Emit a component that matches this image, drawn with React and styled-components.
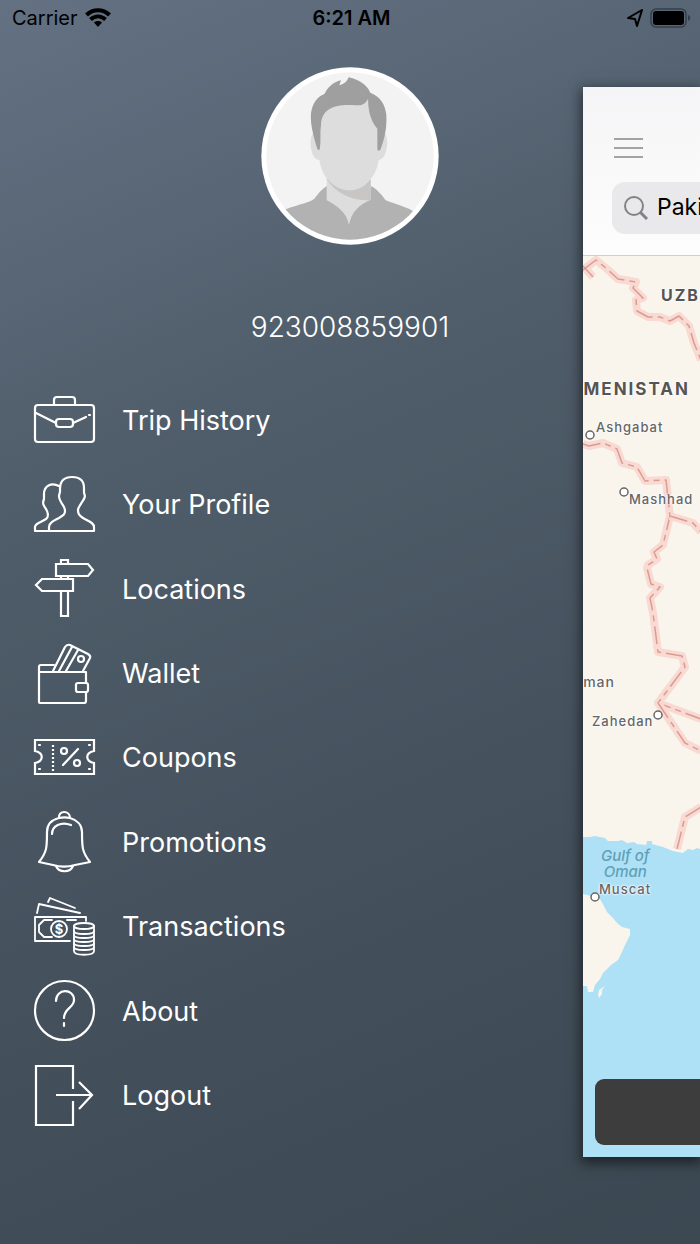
import React from 'react';
import styled, { createGlobalStyle } from 'styled-components';

const GlobalStyle = createGlobalStyle`
  * { box-sizing: border-box; }
  body {
    margin: 0;
    background: #3c4852;
    font-family: Inter, "Liberation Sans", sans-serif;
  }
`;

const Screen = styled.div`
  min-height: 100vh;
  display: grid;
  grid-template-columns: minmax(0, 1fr) 117px;
  overflow: hidden;
  background: linear-gradient(157deg, #637183 0%, #4f5d6a 34%, #434f5b 70%, #3b4751 100%);
`;

const Drawer = styled.main`
  grid-area: 1 / 1 / 2 / 3;
  display: flex;
  flex-direction: column;
  padding-bottom: 106px;
`;

const StatusBar = styled.header`
  display: grid;
  grid-template-columns: 1fr auto 1fr;
  align-items: center;
  height: 36px;
  padding: 0 9px 0 12px;
  color: #000;
  font-size: 20px;
`;

const StatusGroup = styled.div`
  display: flex;
  align-items: center;
  justify-content: ${(p) => (p.$end ? 'flex-end' : 'flex-start')};
  gap: 7px;
`;

const Clock = styled.time`
  font-weight: 600;
`;

const Profile = styled.section`
  display: flex;
  flex-direction: column;
  align-items: center;
  gap: 60px;
  padding: 31px 0 29px;
`;

const Avatar = styled.svg`
  display: block;
  width: 178px;
  height: 178px;
`;

const Phone = styled.p`
  margin: 0;
  color: #fff;
  font-size: 28px;
  line-height: 44px;
  font-weight: 300;
`;

const MenuNav = styled.nav`
  flex: 1;
  display: flex;
  width: 520px;
  max-width: 80%;
`;

const MenuList = styled.ul`
  flex: 1;
  display: grid;
  grid-auto-rows: 1fr;
  margin: 0;
  padding: 0 0 0 32px;
  list-style: none;
`;

const MenuItem = styled.li`
  display: flex;
`;

const MenuLink = styled.a`
  flex: 1;
  display: flex;
  align-items: center;
  gap: 26px;
  color: #fff;
  font-size: 27px;
  text-decoration: none;
`;

const MenuIcon = styled.svg`
  width: 64px;
  height: 64px;
  flex: none;
  fill: none;
  stroke: #fff;
  stroke-width: 2.2;
  stroke-linecap: round;
  stroke-linejoin: round;
`;

const Preview = styled.aside`
  grid-area: 1 / 2 / 2 / 3;
  display: flex;
  flex-direction: column;
  margin: 87px 0;
  box-shadow: 0 4px 12px 2px rgba(0, 0, 0, 0.55);
  overflow: hidden;
  z-index: 1;
`;

const PreviewHeader = styled.div`
  display: flex;
  flex-direction: column;
  align-items: flex-start;
  gap: 20px;
  padding: 46px 0 21px 29px;
  border-bottom: 1px solid #cfcfcf;
  background: linear-gradient(#f5f5f7, #fdfdfd);
`;

const Hamburger = styled.button`
  display: flex;
  flex-direction: column;
  justify-content: center;
  gap: 7px;
  width: 32px;
  height: 29px;
  padding: 0 1px 0 2px;
  border: 0;
  background: none;
`;

const HamburgerLine = styled.span`
  height: 2px;
  background: #a3a3a4;
`;

const SearchBox = styled.label`
  display: flex;
  align-items: center;
  gap: 8px;
  width: 320px;
  height: 52px;
  padding: 0 0 2px 11px;
  border-radius: 13px;
  background: #e9e8ea;
`;

const SearchInput = styled.input`
  flex: 1;
  min-width: 0;
  padding: 0;
  border: 0;
  outline: 0;
  background: none;
  color: #000;
  font: 400 23px Inter, "Liberation Sans", sans-serif;
`;

const MapArea = styled.div`
  position: relative;
  flex: 1;
  display: flex;
  flex-direction: column;
  justify-content: flex-end;
  overflow: hidden;
  background: #aee0f6;
`;

const MapDrawing = styled.svg`
  position: absolute;
  top: 0;
  left: 0;
  width: 117px;
  height: 901px;
`;

const MapLabel = styled.span`
  position: absolute;
  top: ${(p) => p.$y}px;
  left: ${(p) => p.$x}px;
  color: #666;
  font-size: 13px;
  font-weight: 500;
  line-height: 16px;
  letter-spacing: 1px;
  white-space: nowrap;
  text-shadow: 0 0 2px #fff, 0 0 2px #fff, 0 0 3px #fff;
`;

const CountryLabel = styled(MapLabel)`
  color: #555;
  font-size: 16px;
  font-weight: 700;
  letter-spacing: 2px;
`;

const EdgeCountryLabel = styled(CountryLabel)`
  left: auto;
  right: 10px;
  font-size: 17px;
`;

const EdgeCityLabel = styled(MapLabel)`
  left: auto;
  right: 85px;
  font-size: 14px;
`;

const SeaLabel = styled(MapLabel)`
  color: #5fa0b8;
  font-size: 15px;
  font-style: italic;
  font-weight: 500;
  letter-spacing: 0;
  text-align: center;
  text-shadow: none;
`;

const MapAction = styled.button`
  position: relative;
  width: 340px;
  height: 66px;
  margin: 0 0 12px 12px;
  border: 0;
  border-radius: 9px;
  background: #3d3d3d;
`;

const icons = {
  trips: (
    <>
      <rect x="3" y="17" width="59" height="37" rx="3" />
      <path d="M22 17v-5q0-3 3-3h15q3 0 3 3v5" />
      <path d="M4 25 24 35M41 35l13-6M57 27h1" />
      <rect x="24" y="31" width="17" height="8" rx="3" />
    </>
  ),
  profile: (
    <>
      <path d="M28 16C28 7 33 4 40 4s12 3 12 11v5c2 4 0 6-2 9-2 4-4 5-4 8 0 4 1 5 5 8 7 4 11 5 11 9v4H17v-4c0-4 4-6 10-9 5-3 6-4 6-7 0-4-2-5-4-9-3-5-2-7-1-10z" />
      <path d="M27 13c-8-4-15 0-15 8v5c-2 5 0 7 2 10s3 8 0 10C8 50 3 50 3 54v4h14" />
    </>
  ),
  locations: (
    <g strokeLinejoin="miter" strokeLinecap="butt">
      <path d="M24 7h32l5 6-5 6H24zM41 22H10l-6 6 6 6h31z" />
      <path d="M29 7V3h7v4M29 19v3M36 19v3M29 34v25h7V34" />
    </g>
  ),
  wallet: (
    <>
      <path d="M54 41V30H7v30q0 1 2 1h43q2 0 2-2v-9M7 30v-5q0-2 2-2h13" />
      <rect x="44" y="41" width="12" height="9" rx="2" />
      <path d="m21 29 12-24q2-3 5-2l18 9q3 2 2 4l-7 13M27 29 40 5M34 29 46 8" />
      <circle cx="49" cy="17" r="3" />
    </>
  ),
  coupons: (
    <g strokeLinejoin="miter">
      <path d="M3 14h59v11c-9 2-9 10 0 12v11H3V37c9-2 9-10 0-12z" />
      <path d="M21 19v26" strokeDasharray="2 2" strokeLinecap="butt" />
      <path d="M7 19h1M57 19h1M7 43h1M57 43h1M46 23 31 39" />
      <circle cx="32" cy="25" r="3" />
      <circle cx="45" cy="37" r="3" />
    </g>
  ),
  promotions: (
    <>
      <path d="M27 8c-8 2-12 7-12 14 0 15 0 20-8 30l14 3c7 2 15 2 22 0l15-3c-8-10-8-15-8-30 0-7-5-12-12-14-4-1-7-1-11 0z" />
      <path d="M27 8c-1-8 11-8 11 0M24 56c3 7 14 7 17 0M20 24c0-8 9-13 19-9" />
    </>
  ),
  transactions: (
    <g strokeWidth="1.8">
      <path d="M38 46H3V22h51v4M20 25h-8l-5 5v7l5 5h8M35 25h9" />
      <path d="m5 18 2-9 41 9M16 7l2-4 25 10" />
      <circle cx="27" cy="34" r="8" />
      <text
        x="27"
        y="39"
        fill="#fff"
        stroke="none"
        textAnchor="middle"
        fontSize="13"
        fontWeight="700"
      >
        $
      </text>
      <ellipse cx="52" cy="31" rx="10" ry="3" />
      <path d="M42 31v25c0 5 20 5 20 0V31" />
      <path d="M42 36c0 4 20 4 20 0M42 40c0 4 20 4 20 0M42 44c0 4 20 4 20 0M42 48c0 4 20 4 20 0M42 52c0 4 20 4 20 0" />
    </g>
  ),
  about: (
    <>
      <circle cx="32.5" cy="31.5" r="29.5" />
      <path d="M24 22c0-13 18-13 18-1 0 8-10 8-10 18M32 44v3" />
    </>
  ),
  logout: (
    <path d="M41 25V2H4v59h37V37M24 31h36M47 18l13 13-13 14" strokeLinecap="butt" strokeLinejoin="miter" />
  ),
};

const menu = [
  ['trips', 'Trip History'],
  ['profile', 'Your Profile'],
  ['locations', 'Locations'],
  ['wallet', 'Wallet'],
  ['coupons', 'Coupons'],
  ['promotions', 'Promotions'],
  ['transactions', 'Transactions'],
  ['about', 'About'],
  ['logout', 'Logout'],
];

const borders = [
  'M0 10 10 21M0 14 13 4 24 13 35 23 53 26 50 32 60 42 53 44 54 55 65 61 77 61 87 65 96 60 106 70 111 87 118 104',
  'M0 188 6 190 20 187 34 193 39 207 54 211 62 225 83 224 87 260 80 289 71 296 74 303 65 309 64 312 68 328 77 331 67 342 70 357 75 396 99 400 102 411 75 447 118 463',
  'M87 260 110 267 118 276',
  'M75 447 102 487 118 495',
  'M118 551 102 561 94 593',
];

const cities = [
  [7, 179],
  [41, 236],
  [75, 459],
  [12, 641],
];

function ProfilePicture() {
  return (
    <Avatar viewBox="34 22 534 534" role="img" aria-label="Profile picture">
      <defs>
        <clipPath id="face">
          <circle cx="301" cy="289" r="251" />
        </clipPath>
      </defs>
      <circle cx="301" cy="289" r="266" fill="#fff" />
      <g clipPath="url(#face)">
        <path fill="#f3f3f3" d="M34 22h534v534H34z" />
        <path fill="#b2b2b2" d="M30 556V475l80-27c40-15 72-20 84-31 18-22 25-32 43-40h122c20 8 35 26 49 45 18 9 50 14 82 32l80 25v77z" />
        <path fill="#ddd" d="M231 350h132v70c-35 16-58 36-65 76-8-38-32-55-67-74z" />
        <path fill="#c8c5c5" d="M231 358c26 42 75 66 132 64v-62z" />
        <path fill="#ddd" d="M190 222c-14 14-8 78 19 79 5 28 14 48 29 62 34 38 88 39 121 0 15-16 24-36 28-62 28-2 32-68 18-80L370 110H225z" />
        <path fill="#9f9f9f" d="M204 270c-12-38-23-76-20-110 5-31 17-47 41-58 10-20 25-34 49-40l-5 15c12-3 22-9 28-24 31 8 54 20 65 46 31 12 44 35 48 66 2 40-5 70-18 106-8 5-9 0-9-5v-59c-23-27-27-58-28-90-8 18-20 20-37 20-60-4-101 7-104 58-4 25 1 50-4 75z" />
      </g>
    </Avatar>
  );
}

function WifiIcon() {
  return (
    <svg width="26" height="20" viewBox="0 0 26 20" aria-label="Wi-Fi">
      <path d="M1.500 7c6.500-6.500 16.500-6.500 23 0M5.500 11.500c4.500-4 10.500-4 15 0" fill="none" stroke="#000" strokeWidth="4" />
      <path d="m13 19-4-4.500c2-2 6-2 8 0z" />
    </svg>
  );
}

function LocationIcon() {
  return (
    <svg width="16" height="18" viewBox="0 0 16 18" aria-label="Location">
      <path d="M15 1 1 9l7 1 2 7z" fill="none" stroke="#000" strokeWidth="2" strokeLinejoin="round" />
    </svg>
  );
}

function BatteryIcon() {
  return (
    <svg width="41" height="20" viewBox="0 0 41 20" aria-label="Battery full">
      <rect x="1" y="1" width="35" height="18" rx="5" fill="none" stroke="#35404a" strokeWidth="1.5" />
      <rect x="3" y="3" width="31" height="14" rx="3" />
      <path d="M38 7c3 1 3 5 0 6z" fill="#35404a" />
    </svg>
  );
}

function SearchIcon() {
  return (
    <svg width="26" height="26" viewBox="0 0 26 26" fill="none" stroke="#838387" aria-hidden="true">
      <circle cx="11" cy="12" r="9" strokeWidth="2" />
      <path d="m17 18 7 7" strokeWidth="3" />
    </svg>
  );
}

function RegionMap() {
  return (
    <MapDrawing viewBox="0 0 117 901" aria-hidden="true">
      <path
        fill="#f9f5ed"
        d="M0 0h117v593l-3-1-4 2-5-1-5 4-10-2-10-4-11-3v-3h-5l-1 4-9-1-3-2-7 1-5-3-4 1-10 0-3-3-5-1-5-1-5 1H0z"
      />
      <path
        fill="#f9f5ed"
        d="M0 638l8 2 9 3 4 7 3 6 6 6 4 5 5 4 8 2v6l-5 10-3 7-4 8-7 5-8 8-3 6-5 6-2 7H5l-1-6H0zM22 730l-3 4v4l-3 4-1-3 1-5z"
      />
      {borders.map((d) => (
        <g key={d} fill="none" strokeLinejoin="round">
          <path d={d} stroke="#f8dad3" strokeWidth="8" />
          <path d={d} stroke="#dc9b91" strokeWidth="1.5" strokeDasharray="18 5 6 5" />
        </g>
      ))}
      {cities.map(([x, y]) => (
        <circle key={y} cx={x} cy={y} r="4" fill="#fff" stroke="#666" strokeWidth="1.5" />
      ))}
    </MapDrawing>
  );
}

export default function App() {
  return (
    <>
      <GlobalStyle />
      <Screen>
        <Drawer>
          <StatusBar>
            <StatusGroup>
              <span>Carrier</span>
              <WifiIcon />
            </StatusGroup>
            <Clock>6:21 AM</Clock>
            <StatusGroup $end>
              <LocationIcon />
              <BatteryIcon />
            </StatusGroup>
          </StatusBar>
          <Profile>
            <ProfilePicture />
            <Phone>923008859901</Phone>
          </Profile>
          <MenuNav aria-label="Main menu">
            <MenuList>
              {menu.map(([icon, label]) => (
                <MenuItem key={icon}>
                  <MenuLink href={`#${icon}`}>
                    <MenuIcon viewBox="0 0 64 64" aria-hidden="true">
                      {icons[icon]}
                    </MenuIcon>
                    {label}
                  </MenuLink>
                </MenuItem>
              ))}
            </MenuList>
          </MenuNav>
        </Drawer>
        <Preview>
          <PreviewHeader>
            <Hamburger type="button" aria-label="Close menu">
              <HamburgerLine />
              <HamburgerLine />
              <HamburgerLine />
            </Hamburger>
            <SearchBox>
              <SearchIcon />
              <SearchInput type="text" aria-label="Search location" defaultValue="Pakistan" />
            </SearchBox>
          </PreviewHeader>
          <MapArea>
            <RegionMap />
            <CountryLabel $x={78} $y={31}>UZBEKISTAN</CountryLabel>
            <EdgeCountryLabel $y={125}>TURKMENISTAN</EdgeCountryLabel>
            <MapLabel $x={13} $y={163}>Ashgabat</MapLabel>
            <MapLabel $x={46} $y={235}>Mashhad</MapLabel>
            <EdgeCityLabel $y={418}>Kerman</EdgeCityLabel>
            <MapLabel $x={9} $y={457}>Zahedan</MapLabel>
            <SeaLabel $x={18} $y={592}>
              Gulf of
              <br />
              Oman
            </SeaLabel>
            <MapLabel $x={16} $y={625}>Muscat</MapLabel>
            <MapAction type="button" aria-label="Confirm location" />
          </MapArea>
        </Preview>
      </Screen>
    </>
  );
}
